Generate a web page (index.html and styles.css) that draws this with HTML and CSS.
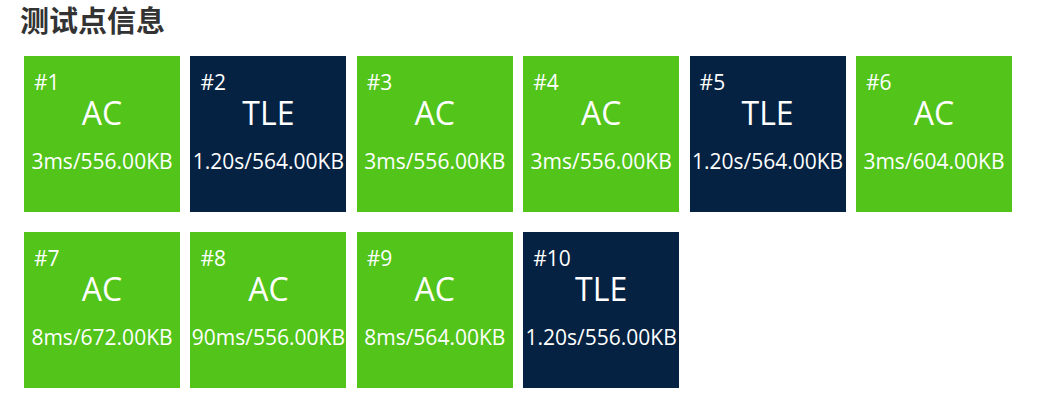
FILE: index.html
```html
<!DOCTYPE html>
<html lang="zh">
<head>
<meta charset="utf-8">
<link rel="stylesheet" href="styles.css">
</head>
<body>
<div class="page">
  <h3 class="title">测试点信息</h3>
  <div class="cases">
    <div class="case ac"><div class="num">#1</div><div class="status">AC</div><div class="info">3ms/556.00KB</div></div>
    <div class="case tle"><div class="num">#2</div><div class="status">TLE</div><div class="info">1.20s/564.00KB</div></div>
    <div class="case ac"><div class="num">#3</div><div class="status">AC</div><div class="info">3ms/556.00KB</div></div>
    <div class="case ac"><div class="num">#4</div><div class="status">AC</div><div class="info">3ms/556.00KB</div></div>
    <div class="case tle"><div class="num">#5</div><div class="status">TLE</div><div class="info">1.20s/564.00KB</div></div>
    <div class="case ac"><div class="num">#6</div><div class="status">AC</div><div class="info">3ms/604.00KB</div></div>
    <div class="case ac"><div class="num">#7</div><div class="status">AC</div><div class="info">8ms/672.00KB</div></div>
    <div class="case ac"><div class="num">#8</div><div class="status">AC</div><div class="info">90ms/556.00KB</div></div>
    <div class="case ac"><div class="num">#9</div><div class="status">AC</div><div class="info">8ms/564.00KB</div></div>
    <div class="case tle"><div class="num">#10</div><div class="status">TLE</div><div class="info">1.20s/556.00KB</div></div>
  </div>
</div>
</body>
</html>
```
FILE: styles.css
```css
html, body {
  margin: 0;
  padding: 0;
  background: #fff;
}
.page {
  padding: 0 0 0 24px;
  font-family: "Open Sans", "Noto Sans CJK SC", sans-serif;
}
.title {
  margin: 0 0 0 -4px;
  height: 56px;
  box-sizing: border-box;
  font-family: "Noto Sans CJK SC", sans-serif;
  font-size: 29px;
  line-height: 38px;
  font-weight: 700;
  color: #333;
}
.cases {
  display: flex;
  flex-wrap: wrap;
  column-gap: 10.4px;
  row-gap: 20px;
  width: 1000px;
}
.case {
  width: 156px;
  height: 156px;
  box-sizing: border-box;
  color: #fff;
  display: flex;
  flex-direction: column;
}
.ac { background: #52c41a; }
.tle { background: #052242; }
.num {
  font-size: 21px;
  line-height: 28px;
  padding: 12px 0 0 10px;
  text-align: left;
}
.status {
  font-size: 32px;
  line-height: 36px;
  text-align: center;
  margin-top: -1px;
}
.info {
  font-size: 21px;
  line-height: 28px;
  text-align: center;
  margin-top: 16px;
  white-space: nowrap;
}
```
